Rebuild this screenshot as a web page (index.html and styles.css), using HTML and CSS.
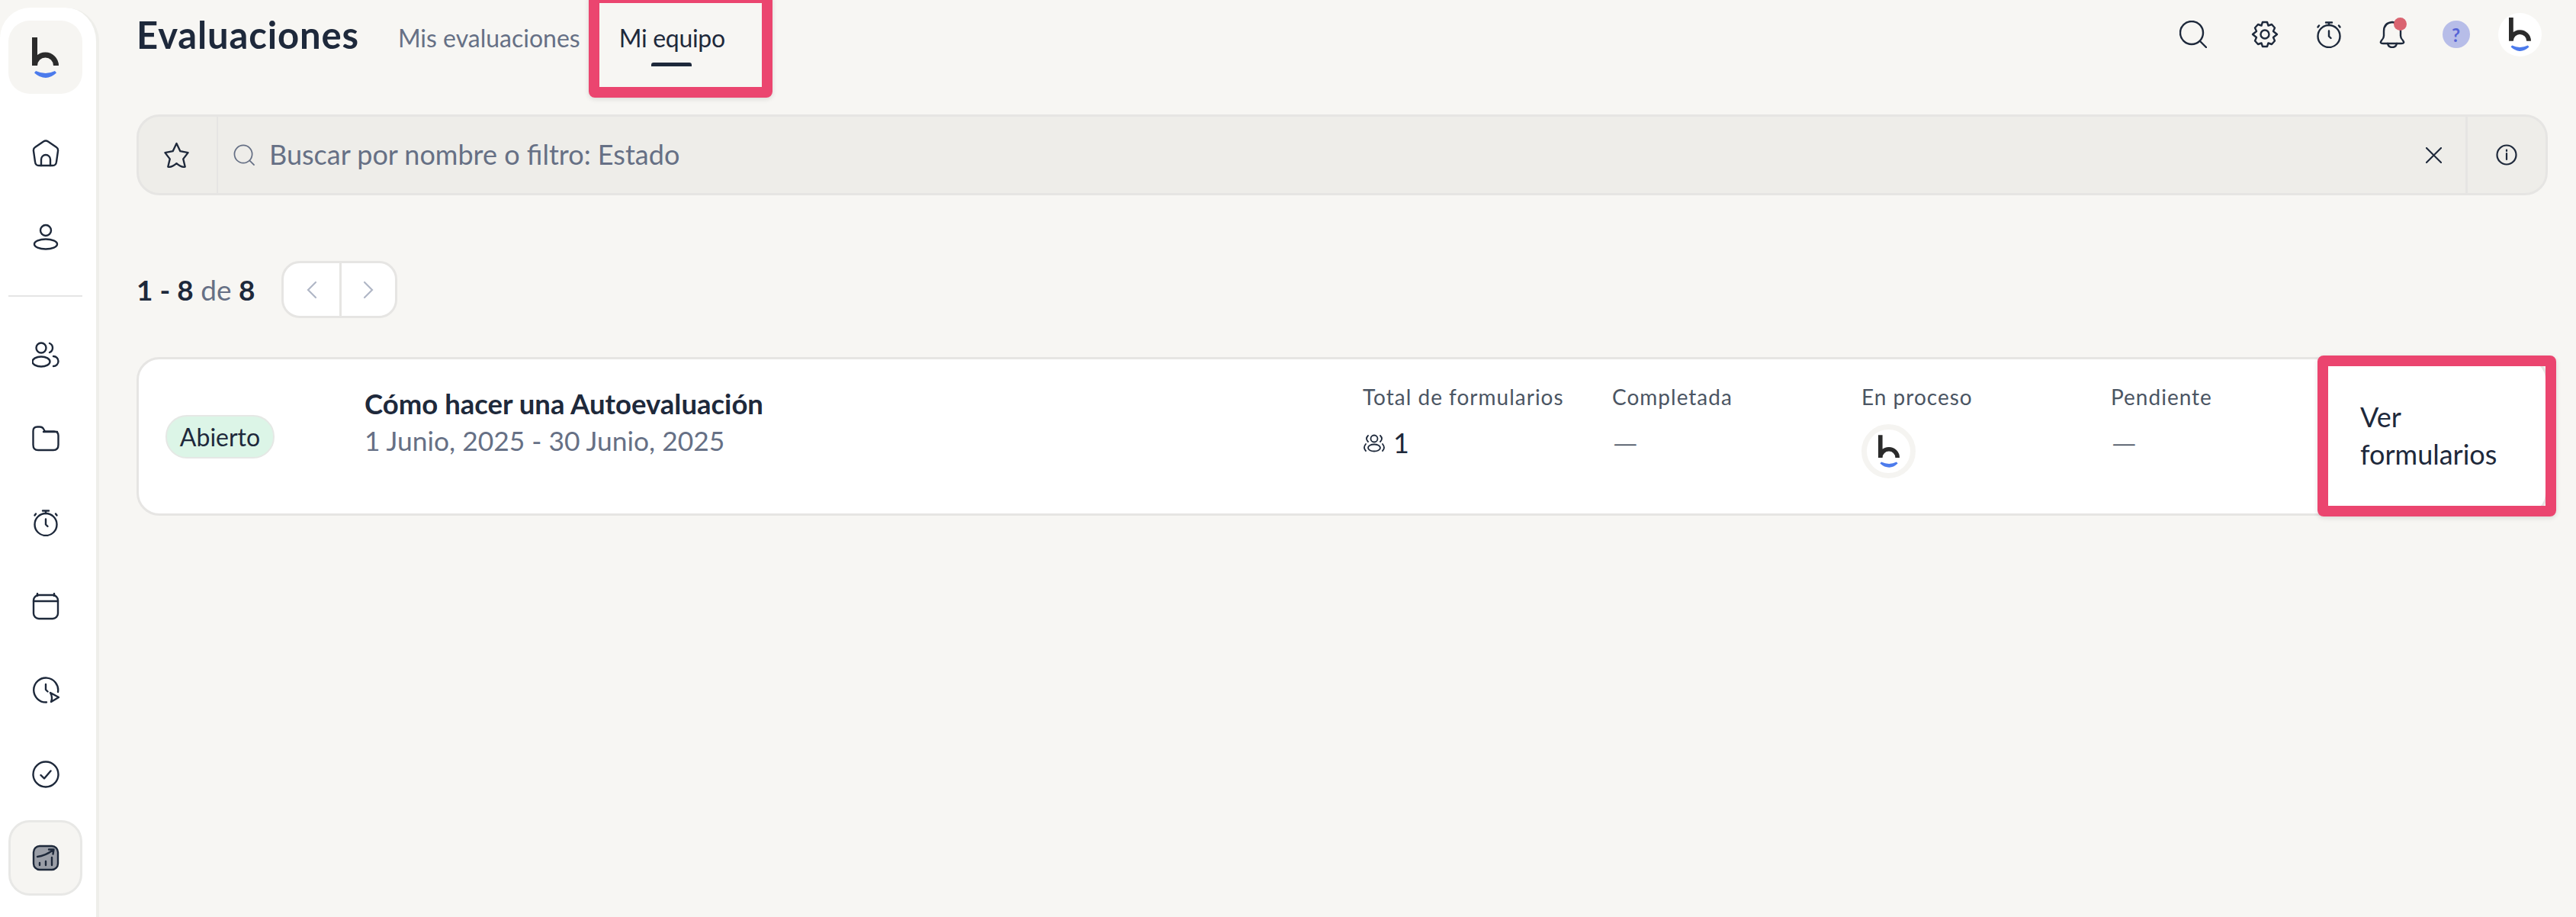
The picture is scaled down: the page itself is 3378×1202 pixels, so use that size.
FILE: index.html
```html
<!DOCTYPE html>
<html lang="es">
<head>
<meta charset="utf-8">
<title>Evaluaciones</title>
<link rel="stylesheet" href="styles.css">
</head>
<body>
<svg class="defs" width="0" height="0" aria-hidden="true">
  <symbol id="logo" viewBox="0 0 35 53">
    <path d="M3.5 0V37M3.5 37A14 14 0 0 1 31.5 37" fill="none" stroke="#2b2b2b" stroke-width="7"/>
    <path d="M5 44Q18 50 30 44L32 46.500Q25 53 18 53Q10 53 3 46.500Z" fill="#4c7bec"/>
  </symbol>
  <symbol id="stopwatch" viewBox="0 0 36 36">
    <circle cx="18" cy="20.500" r="14.500"/>
    <path d="M14 2.500H22M18 2.500V6M5 6.500L3.500 8.500M31 6.500L32.500 8.500M18 13.500V20.500L20.500 23"/>
  </symbol>
</svg>
<aside class="sidebar">
  <div class="brand"><svg class="brand-logo"><use href="#logo"/></svg></div>
  <nav class="nav">
    <a class="nav-item"><svg class="icon" viewBox="0 0 36 36"><path d="M15 2.500Q18 .5 21 2.500L32 10Q34.500 11.500 34 15L32 29Q31.500 34 27 34H9Q4.500 34 4 29L2 15Q1.500 11.500 4 10Z"/><path d="M12 34V26A6 6 0 0 1 24 26V34"/></svg></a>
    <a class="nav-item"><svg class="icon" viewBox="0 0 36 36"><circle cx="18" cy="9" r="7"/><ellipse cx="18" cy="27" rx="15" ry="6.500"/></svg></a>
    <hr class="nav-divider">
    <a class="nav-item"><svg class="icon" viewBox="0 0 36 36"><circle cx="12" cy="9" r="6.500"/><ellipse cx="12" cy="27" rx="11.500" ry="6.500"/><path d="M23 3A6.500 6.500 0 0 1 23 15M28 20A6.500 6.500 0 0 1 28 33"/></svg></a>
    <a class="nav-item"><svg class="icon" viewBox="0 0 36 36"><path d="M1.500 10V8Q1.500 2.500 7 2.500H10Q14 2.500 15.500 6L17 8.500H29Q34.500 8.500 34.500 14V26Q34.500 33 28 33H8Q1.500 33 1.500 26ZM15 9H33"/></svg></a>
    <a class="nav-item"><svg class="icon"><use href="#stopwatch"/></svg></a>
    <a class="nav-item"><svg class="icon" viewBox="0 0 36 36"><rect x="2" y="3" width="32" height="31" rx="7"/><path d="M2 11H34M7 1V4M29 1V4"/></svg></a>
    <a class="nav-item"><svg class="icon" viewBox="0 0 36 36"><path d="M19 33.500A16 16 0 1 1 34 20M18 10V17L20.500 19.500"/><path d="M24 21L35 27L25 33Q27.500 27 24 21Z"/></svg></a>
    <a class="nav-item"><svg class="icon" viewBox="0 0 36 36"><circle cx="18" cy="18" r="16.500"/><path d="M11.500 19L16 23.500L24.500 13.500"/></svg></a>
    <a class="nav-item nav-item-active"><svg class="icon" viewBox="0 0 36 36"><rect class="icon-fill" x="2" y="2" width="32" height="31" rx="8"/><path d="M7 16Q17 15 28 7M22 6.500L28.500 6.500L27.500 12.500M10 24V27M18 22V27M26 17V27"/></svg></a>
  </nav>
</aside>
<main class="main">
  <header class="topbar">
    <h1 class="title">Evaluaciones</h1>
    <div class="tabs">
      <a class="tab">Mis evaluaciones</a>
      <a class="tab tab-active">Mi equipo<span class="highlight highlight-tab"></span></a>
    </div>
    <div class="top-actions">
      <svg class="top-icon top-search" viewBox="0 0 36 36"><circle cx="16" cy="16" r="15"/><path d="M27 27L35 35"/></svg>
      <svg class="top-icon" viewBox="0 0 36 36"><path d="M15 2H21L22.500 6.500L27 5L31 9.500L29 14L34 18L29 22L31 26.500L27 31L22.500 29.500L21 34H15L13.500 29.500L9 31L5 26.500L7 22L2 18L7 14L5 9.500L9 5L13.500 6.500Z" stroke-linejoin="round"/><circle cx="18" cy="18" r="5.500"/></svg>
      <svg class="top-icon"><use href="#stopwatch"/></svg>
      <span class="bell">
        <svg class="top-icon" viewBox="0 0 36 36"><path d="M18 2Q7 3 7 14V20Q7 23 4 26Q1 30 6 30H30Q35 30 32 26Q29 23 29 20V14Q29 3 18 2Z"/><path d="M12 30Q13 35 18 35Q23 35 24 30"/></svg>
        <span class="bell-dot"></span>
      </span>
      <span class="help">?</span>
      <span class="avatar-top"><svg class="avatar-top-logo"><use href="#logo"/></svg></span>
    </div>
  </header>

  <div class="search">
    <button class="search-star"><svg class="star" viewBox="0 0 36 36"><path d="M18 2L23 12.500L33.500 14.500L27 23L29.500 33.500Q25 35 18 29Q11 35 6.500 33.500L9 23L2.500 14.500L13 12.500Z" stroke-linejoin="round"/></svg></button>
    <div class="search-field">
      <svg class="search-glass" viewBox="0 0 30 30"><circle cx="13.500" cy="13.500" r="12"/><path d="M22 22L28 28"/></svg>
      <span class="placeholder">Buscar por nombre o filtro: Estado</span>
      <svg class="search-close" viewBox="0 0 22 22"><path d="M1 1L21 21M21 1L1 21"/></svg>
    </div>
    <button class="search-info"><svg class="info" viewBox="0 0 28 28"><circle cx="14" cy="14" r="12.500"/><path d="M14 12V20M14 7.500V9"/></svg></button>
  </div>

  <div class="pagination">
    <span class="range"><b>1 - 8</b> de <b>8</b></span>
    <div class="pager">
      <button class="pager-btn"><svg class="chev" viewBox="0 0 14 24"><path d="M12 2L2 12L12 22"/></svg></button>
      <button class="pager-btn"><svg class="chev" viewBox="0 0 14 24"><path d="M2 2L12 12L2 22"/></svg></button>
    </div>
  </div>

  <section class="card">
    <span class="badge">Abierto</span>
    <div class="card-info">
      <div class="card-title">Cómo hacer una Autoevaluación</div>
      <div class="card-date">1 Junio, 2025 - 30 Junio, 2025</div>
    </div>
    <div class="stat">
      <div class="stat-label">Total de formularios</div>
      <div class="stat-value"><svg class="group" viewBox="0 0 30 24"><circle cx="15" cy="6" r="4.500"/><ellipse cx="15" cy="18" rx="8" ry="4.500"/><path d="M7 2Q3 6 7 10M23 2Q27 6 23 10M4 13Q0 18 4 22M26 13Q30 18 26 22"/></svg><span class="stat-num">1</span></div>
    </div>
    <div class="stat">
      <div class="stat-label">Completada</div>
      <div class="stat-value"><span class="stat-dash">—</span></div>
    </div>
    <div class="stat">
      <div class="stat-label">En proceso</div>
      <div class="stat-value"><span class="avatar-small"><svg class="avatar-small-logo"><use href="#logo"/></svg></span></div>
    </div>
    <div class="stat stat-last">
      <div class="stat-label">Pendiente</div>
      <div class="stat-value"><span class="stat-dash">—</span></div>
    </div>
    <a class="card-action">Ver formularios<span class="highlight highlight-action"></span></a>
  </section>
</main>
</body>
</html>
```
FILE: styles.css
```css
* { box-sizing: border-box; }
html, body { margin: 0; height: 1202px; overflow: hidden; }
body {
  display: flex;
  background: #f7f6f3;
  color: #1e293b;
  font-family: "Lato", "Noto Sans", sans-serif;
}
.defs { position: absolute; }

.sidebar {
  flex: none;
  width: 130px;
  margin-top: 10px;
  padding: 17px 18px 0 11px;
  background: #fff;
  border-right: 4px solid #eeeeea;
  border-radius: 40px 44px 0 0;
}
.brand {
  height: 96px;
  margin-bottom: 23px;
  display: flex;
  justify-content: center;
  align-items: center;
  background: #f6f5f2;
  border-radius: 28px;
}
.brand-logo { width: 35px; height: 53px; }
.nav { display: flex; flex-direction: column; }
.nav-item {
  height: 110px;
  display: flex;
  align-items: center;
  justify-content: center;
}
.nav-item-active {
  height: 99px;
  margin-top: 5px;
  background: #f6f5f2;
  border: 3px solid #e8e8e6;
  border-radius: 28px;
}
.nav-divider {
  width: 97px;
  height: 2px;
  margin: 21px 0;
  border: 0;
  background: #e5e5e5;
}
.icon {
  width: 36px;
  height: 36px;
  fill: none;
  stroke: #1e293b;
  stroke-width: 2.400;
  stroke-linecap: round;
  stroke-linejoin: round;
}
.icon use, .top-icon use { fill: none; }
.icon-fill { fill: #9a9ea7; }

.main {
  flex: 1;
  min-width: 0;
  padding: 0 37px 0 49px;
}
.topbar {
  height: 90px;
  display: flex;
  align-items: center;
}
.title {
  margin: 0 51px 0 0;
  font-size: 49px;
  font-weight: 700;
  line-height: 90px;
  letter-spacing: .85px;
}
.tabs { display: flex; gap: 51px; }
.tab {
  position: relative;
  font-size: 32px;
  line-height: 40px;
  margin-top: 10px;
  color: #667085;
}
.tab-active { color: #1e293b; letter-spacing: -.3px; }
.tab-active::after {
  content: "";
  position: absolute;
  left: 42px;
  bottom: -17px;
  width: 53px;
  height: 5px;
  background: #1e293b;
  border-radius: 3px 3px 0 0;
}
.highlight {
  position: absolute;
  border: 14px solid #eb456f;
  border-radius: 8px;
  box-shadow: 0 2px 6px rgba(0, 0, 0, .12);
  pointer-events: none;
}
.highlight-tab { left: -40px; top: -40px; width: 241px; height: 138px; }

.top-actions {
  margin-left: auto;
  padding-right: 8px;
  display: flex;
  align-items: center;
  gap: 47.500px;
}
.top-icon {
  display: block;
  width: 36px;
  height: 36px;
  fill: none;
  stroke: #1e293b;
  stroke-width: 2.400;
  stroke-linecap: round;
}
.top-search { margin-right: 11px; }
.bell { position: relative; display: block; }
.bell-dot {
  position: absolute;
  top: -4px;
  right: -1px;
  width: 17px;
  height: 17px;
  border-radius: 50%;
  background: #da6470;
}
.help {
  width: 36px;
  height: 36px;
  margin-right: -10px;
  display: flex;
  align-items: center;
  justify-content: center;
  border-radius: 50%;
  background: #b7bde8;
  color: #5563d6;
  font-size: 24px;
  font-weight: 700;
}
.avatar-top {
  width: 57px;
  height: 57px;
  display: flex;
  align-items: center;
  justify-content: center;
  border-radius: 50%;
  background: #fff;
}
.avatar-top-logo { width: 29px; height: 44px; }

.search {
  height: 106px;
  margin-top: 60px;
  display: flex;
  background: #eeede9;
  border: 3px solid #e6e5e3;
  border-radius: 30px;
}
.search-star, .search-info {
  flex: none;
  padding: 0;
  display: flex;
  align-items: center;
  justify-content: center;
  background: none;
  border: 0;
}
.search-star { width: 104px; padding-right: 4px; border-right: 2px solid #e6e5e3; }
.search-info { width: 105px; border-left: 3px solid #e6e5e3; }
.star, .info, .search-glass, .search-close, .chev, .group {
  fill: none;
  stroke: #1e293b;
  stroke-width: 2.200;
  stroke-linecap: round;
}
.star { width: 35px; height: 35px; stroke-width: 2.400; }
.info { width: 28px; height: 28px; }
.search-field {
  flex: 1;
  display: flex;
  align-items: center;
  padding: 0 31px 0 20px;
}
.search-glass { width: 29px; height: 29px; stroke: #667085; stroke-width: 1.800; }
.placeholder {
  margin: -2px 0 0 18px;
  font-size: 36px;
  color: #667085;
}
.search-close { width: 21px; height: 21px; margin-left: auto; }

.pagination {
  height: 75px;
  margin-top: 86px;
  display: flex;
  align-items: center;
}
.range {
  font-size: 37px;
  color: #667085;
}
.range b { color: #1e293b; font-weight: 700; }
.pager {
  height: 75px;
  margin-left: 35px;
  display: flex;
  background: #fff;
  border: 3px solid #e6e5e3;
  border-radius: 24px;
}
.pager-btn {
  width: 73px;
  padding: 0;
  display: flex;
  align-items: center;
  justify-content: center;
  background: none;
  border: 0;
}
.pager-btn + .pager-btn { border-left: 3px solid #e6e5e3; }
.chev { width: 14px; height: 24px; stroke: #b0b7c6; }

.card {
  height: 208px;
  margin-top: 51px;
  padding-left: 35px;
  display: flex;
  align-items: stretch;
  background: #fff;
  border: 3px solid #e6e5e3;
  border-radius: 30px;
}
.badge {
  flex: none;
  align-self: center;
  width: 143px;
  height: 57px;
  display: flex;
  align-items: center;
  justify-content: center;
  background: #dcf5e7;
  border: 2px solid #e5e8e5;
  border-radius: 28px;
  font-size: 32px;
}
.card-info { flex: 1; margin-left: 118px; padding-top: 34px; }
.card-title { font-size: 36.500px; font-weight: 700; line-height: 48px; }
.card-date { font-size: 35.400px; line-height: 50px; color: #667085; }
.stat { flex: none; width: 327px; padding-top: 31px; }
.stat-last { width: 271px; }
.stat-label {
  font-size: 28px;
  line-height: 36px;
  letter-spacing: 1px;
  color: #4b5563;
}
.stat-value {
  margin-top: 18px;
  display: flex;
  align-items: flex-start;
  height: 46px;
}
.group { width: 30px; height: 24px; margin: 13px 10px 0 0; stroke-width: 1.800; }
.stat-num { font-size: 36px; line-height: 48px; }
.stat-dash { font-size: 44px; font-weight: 300; line-height: 46px; color: #374151; }
.avatar-small {
  flex: none;
  width: 71px;
  height: 71px;
  display: flex;
  align-items: center;
  justify-content: center;
  border: 7px solid #f5f4f1;
  border-radius: 50%;
}
.avatar-small-logo { width: 28px; height: 43px; }
.card-action {
  position: relative;
  flex: none;
  width: 299px;
  padding: 51px 60px 0 56px;
  font-size: 36px;
  line-height: 49px;
}
.highlight-action { left: 0; top: -5px; right: -14px; height: 211px; }
```
